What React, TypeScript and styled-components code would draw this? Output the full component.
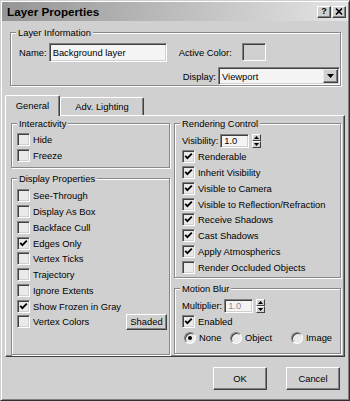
import styled, { createGlobalStyle } from "styled-components";

const Global = createGlobalStyle`
  html, body { margin: 0; padding: 0; background: #d0d0d0; }
  * { box-sizing: border-box; }
`;

const Win = styled.div`
  width: 350px;
  height: 401px;
  background: #d0d0d0;
  border: 1px solid;
  border-color: #d0d0d0 #303030 #303030 #d0d0d0;
  box-shadow: inset 1px 1px 0 #fff, inset -1px -1px 0 #808080;
  padding: 1px;
  display: flex;
  flex-direction: column;
  font-family: "Liberation Sans", Arial, sans-serif;
  font-size: 9.4px;
  color: #000;
`;

const TitleBar = styled.div`
  height: 19px;
  display: flex;
  align-items: center;
  padding: 0 2px 0 5px;
  background: linear-gradient(to right, #959595, #e4e4e4);
`;

const Title = styled.div`
  flex: 1;
  font-weight: bold;
  font-size: 11.7px;
  color: #000;
`;

const CapBtn = styled.div`
  width: 14px;
  height: 12px;
  margin-left: 1px;
  background: #d0d0d0;
  border: 1px solid;
  border-color: #fff #404040 #404040 #fff;
  box-shadow: inset -1px -1px 0 #808080;
  display: flex;
  align-items: center;
  justify-content: center;
  font-weight: bold;
  font-size: 9px;
  line-height: 1;
`;

const Group = styled.div<{ $w?: number; $h: number; $mt?: number }>`
  width: ${(p) => (p.$w ? `${p.$w}px` : "auto")};
  height: ${(p) => p.$h}px;
  margin-top: ${(p) => p.$mt ?? 0}px;
  border: 1px solid #888;
  box-shadow: inset 1px 1px 0 #fff, 1px 1px 0 #fff;
  display: flex;
  flex-direction: column;
  background: #d0d0d0;
`;

const Legend = styled.div`
  align-self: flex-start;
  margin: -6px 0 0 5px;
  padding: 0 2px;
  line-height: 11px;
  background: #d0d0d0;
`;

const InfoGroup = styled(Group)`
  margin-left: 8px;
`;

const InfoBody = styled.div`
  display: flex;
  padding: 4px 0 0 8px;
`;

const Row = styled.div<{ $h?: number; $pl?: number; $mt?: number }>`
  display: flex;
  align-items: center;
  height: ${(p) => p.$h ?? 16}px;
  padding-left: ${(p) => p.$pl ?? 0}px;
  margin-top: ${(p) => p.$mt ?? 0}px;
  white-space: nowrap;
`;

const Sunken = styled.div<{ $w: number; $h: number; $bg?: string; $ml?: number }>`
  width: ${(p) => p.$w}px;
  height: ${(p) => p.$h}px;
  margin-left: ${(p) => p.$ml ?? 0}px;
  background: ${(p) => p.$bg ?? "#f4f4f4"};
  border: 1px solid;
  border-color: #808080 #fff #fff #808080;
  box-shadow: inset 1px 1px 0 #404040, inset -1px -1px 0 #d0d0d0;
  display: flex;
  align-items: center;
  padding-left: 3px;
`;

const RightCol = styled.div`
  display: flex;
  flex-direction: column;
  margin-left: 12px;
`;

const DropArrow = styled.div`
  margin-left: auto;
  width: 15px;
  height: 14px;
  margin-right: 1px;
  background: #d0d0d0;
  border: 1px solid;
  border-color: #e8e8e8 #404040 #404040 #e8e8e8;
  box-shadow: inset -1px -1px 0 #808080;
  display: flex;
  align-items: center;
  justify-content: center;
`;

const Tri = ({ up }: { up?: boolean }) => (
  <svg width="7" height="4" viewBox="0 0 7 4">
    <path d={up ? "M3.5 0 L7 4 L0 4 Z" : "M0 0 L7 0 L3.5 4 Z"} fill="#000" />
  </svg>
);

const TabStrip = styled.div`
  display: flex;
  align-items: flex-end;
  height: 20px;
  margin: 9px 0 0 3px;
  position: relative;
  z-index: 1;
`;

const Tab = styled.div<{ $active?: boolean; $w: number }>`
  width: ${(p) => p.$w}px;
  height: ${(p) => (p.$active ? 21 : 18)}px;
  margin-bottom: ${(p) => (p.$active ? -1 : 0)}px;
  background: #d0d0d0;
  border: 1px solid;
  border-bottom: none;
  border-color: #fff #404040 #fff #fff;
  border-radius: 2px 2px 0 0;
  box-shadow: inset -1px 0 0 #808080;
  display: flex;
  align-items: center;
  justify-content: center;
  padding-bottom: ${(p) => (p.$active ? 2 : 0)}px;
`;

const Panel = styled.div`
  width: 340px;
  height: 242px;
  margin-left: 3px;
  border: 1px solid;
  border-color: #fff #404040 #404040 #fff;
  box-shadow: inset -1px -1px 0 #808080;
  display: grid;
  grid-template-columns: 159px 167px;
  column-gap: 4px;
  padding: 7px 0 0 5px;
  align-content: start;
`;

const Col = styled.div`
  display: flex;
  flex-direction: column;
`;

const Items = styled.div<{ $pl: number; $mt?: number }>`
  display: flex;
  flex-direction: column;
  padding-left: ${(p) => p.$pl}px;
  margin-top: ${(p) => p.$mt ?? 3}px;
`;

const CheckRow = styled.div<{ $h?: number }>`
  display: flex;
  align-items: center;
  height: ${(p) => p.$h ?? 15.75}px;
  white-space: nowrap;
`;

const Box = styled.span`
  width: 13px;
  height: 13px;
  flex: none;
  margin-right: 3px;
  background: #eaeaea;
  border: 1px solid;
  border-color: #808080 #fff #fff #808080;
  box-shadow: inset 1px 1px 0 #404040, inset -1px -1px 0 #d0d0d0;
  display: flex;
  align-items: center;
  justify-content: center;
`;

const Check = ({ on, label }: { on?: boolean; label: string }) => (
  <CheckRow>
    <Box>
      {on && (
        <svg width="9" height="9" viewBox="0 0 9 9">
          <path d="M1.2 3.8 L3.4 6.2 L7.8 1.6" stroke="#000" strokeWidth="1.8" fill="none" />
        </svg>
      )}
    </Box>
    {label}
  </CheckRow>
);

const RadioRow = styled.div`
  display: grid;
  grid-template-columns: 48px 61px auto;
  height: 15.75px;
  align-items: center;
`;

const RadioItem = styled.div<{ $pl?: number }>`
  display: flex;
  align-items: center;
  padding-left: ${(p) => p.$pl ?? 0}px;
`;

const RadioDot = styled.span<{ $on?: boolean }>`
  width: 12px;
  height: 12px;
  flex: none;
  margin-right: 3px;
  border-radius: 50%;
  background: #eaeaea;
  border: 1px solid;
  border-color: #808080 #fff #fff #808080;
  box-shadow: inset 1px 1px 0 #404040;
  display: flex;
  align-items: center;
  justify-content: center;
  &::after {
    content: "";
    width: 4px;
    height: 4px;
    border-radius: 50%;
    background: ${(p) => (p.$on ? "#000" : "transparent")};
  }
`;

const Spin = styled.div`
  display: flex;
  flex-direction: column;
  margin-left: 3px;
`;

const SpinBtn = styled.div`
  width: 9px;
  height: 7px;
  background: #d0d0d0;
  border: 1px solid;
  border-color: #fff #404040 #404040 #fff;
  display: flex;
  align-items: center;
  justify-content: center;
  svg {
    width: 5px;
    height: 3px;
  }
`;

const Spinner = ({ value, ml, dim }: { value: string; ml: number; dim?: boolean }) => (
  <>
    <Sunken $w={29} $h={14} $ml={ml} style={{ color: dim ? "#8a8a8a" : "#000" }}>
      {value}
    </Sunken>
    <Spin>
      <SpinBtn>
        <Tri up />
      </SpinBtn>
      <SpinBtn>
        <Tri />
      </SpinBtn>
    </Spin>
  </>
);

const PushBtn = styled.div<{ $w: number; $ml?: number }>`
  width: ${(p) => p.$w}px;
  height: 23px;
  margin-left: ${(p) => p.$ml ?? 0}px;
  background: #d0d0d0;
  border: 1px solid;
  border-color: #fff #404040 #404040 #fff;
  box-shadow: inset -1px -1px 0 #808080;
  display: flex;
  align-items: center;
  justify-content: center;
`;

const SmallBtn = styled(PushBtn)`
  height: 16px;
  margin-left: auto;
  margin-right: 2px;
`;

const Footer = styled.div`
  display: flex;
  justify-content: flex-end;
  padding-right: 8px;
  margin-top: 10px;
`;

export default function App() {
  return (
    <>
      <Global />
      <Win>
        <TitleBar>
          <Title>Layer Properties</Title>
          <CapBtn>?</CapBtn>
          <CapBtn>
            <svg width="8" height="7" viewBox="0 0 8 7">
              <path d="M1 0.5 L7 6.5 M7 0.5 L1 6.5" stroke="#000" strokeWidth="1.6" />
            </svg>
          </CapBtn>
        </TitleBar>

        <InfoGroup $w={331} $h={54} $mt={11}>
          <Legend>Layer Information</Legend>
          <InfoBody>
            <Row $h={20}>
              Name:
              <Sunken $w={118} $h={19} $ml={2}>
                Background layer
              </Sunken>
            </Row>
            <RightCol>
              <Row $h={20}>
                Active Color:
                <Sunken $w={24} $h={18} $ml={10} $bg="#d0d0d0" />
              </Row>
              <Row $h={18} $pl={4} $mt={5}>
                Display:
                <Sunken $w={122} $h={18} $ml={2}>
                  Viewport
                  <DropArrow>
                    <Tri />
                  </DropArrow>
                </Sunken>
              </Row>
            </RightCol>
          </InfoBody>
        </InfoGroup>

        <TabStrip>
          <Tab $active $w={55}>
            General
          </Tab>
          <Tab $w={84}>Adv. Lighting</Tab>
        </TabStrip>

        <Panel>
          <Col>
            <Group $h={45}>
              <Legend>Interactivity</Legend>
              <Items $pl={5}>
                <Check label="Hide" />
                <Check label="Freeze" />
              </Items>
            </Group>
            <Group $h={177} $mt={10}>
              <Legend>Display Properties</Legend>
              <Items $pl={5} $mt={4}>
                <Check label="See-Through" />
                <Check label="Display As Box" />
                <Check label="Backface Cull" />
                <Check on label="Edges Only" />
                <Check label="Vertex Ticks" />
                <Check label="Trajectory" />
                <Check label="Ignore Extents" />
                <Check on label="Show Frozen in Gray" />
                <CheckRow>
                  <Box />
                  Vertex Colors
                  <SmallBtn $w={41}>Shaded</SmallBtn>
                </CheckRow>
              </Items>
            </Group>
          </Col>
          <Col>
            <Group $h={155}>
              <Legend>Rendering Control</Legend>
              <Items $pl={7} $mt={3}>
                <Row $h={17}>
                  Visibility:
                  <Spinner value="1.0" ml={2} />
                </Row>
                <Check on label="Renderable" />
                <Check on label="Inherit Visibility" />
                <Check on label="Visible to Camera" />
                <Check on label="Visible to Reflection/Refraction" />
                <Check on label="Receive Shadows" />
                <Check on label="Cast Shadows" />
                <Check on label="Apply Atmospherics" />
                <Check label="Render Occluded Objects" />
              </Items>
            </Group>
            <Group $h={66} $mt={10}>
              <Legend>Motion Blur</Legend>
              <Items $pl={7} $mt={3}>
                <Row $h={17}>
                  Multiplier:
                  <Spinner value="1.0" ml={2} dim />
                </Row>
                <Check on label="Enabled" />
                <RadioRow>
                  <RadioItem $pl={2}>
                    <RadioDot $on />
                    None
                  </RadioItem>
                  <RadioItem>
                    <RadioDot />
                    Object
                  </RadioItem>
                  <RadioItem>
                    <RadioDot />
                    Image
                  </RadioItem>
                </RadioRow>
              </Items>
            </Group>
          </Col>
        </Panel>

        <Footer>
          <PushBtn $w={54}>OK</PushBtn>
          <PushBtn $w={54} $ml={19}>
            Cancel
          </PushBtn>
        </Footer>
      </Win>
    </>
  );
}
